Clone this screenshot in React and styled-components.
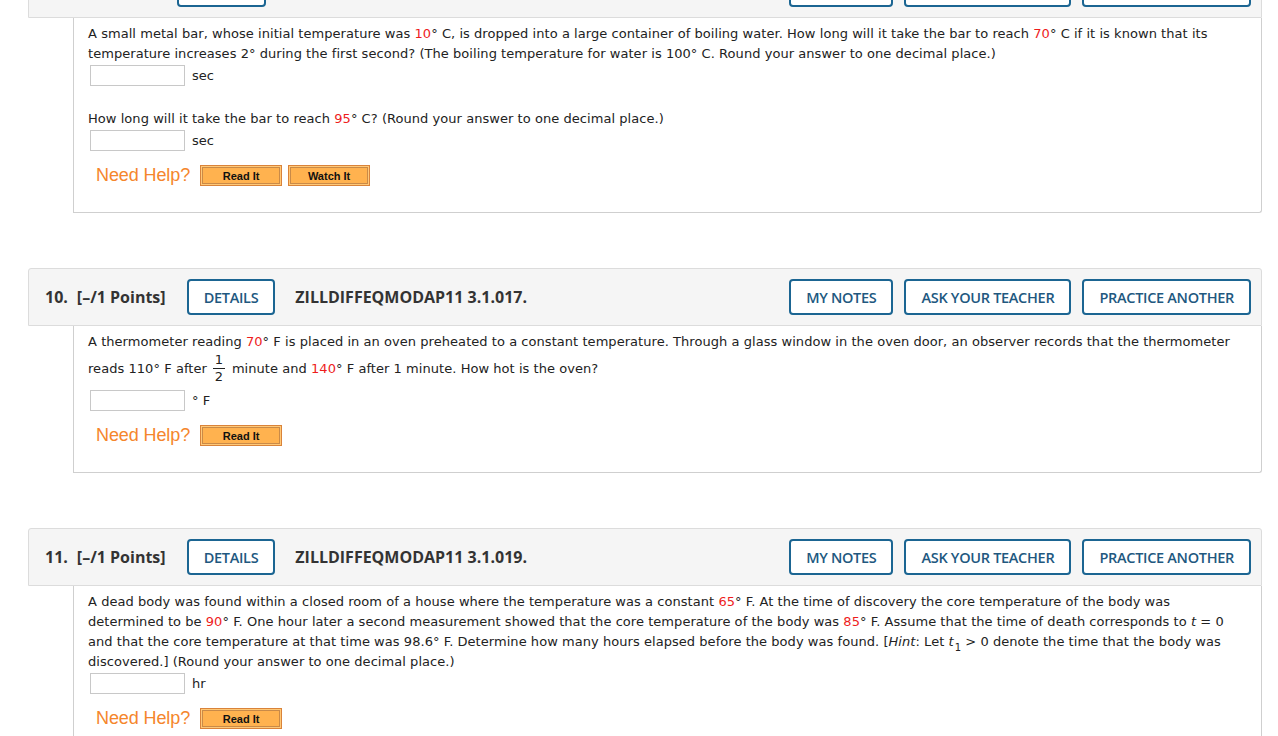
import React from 'react';
import styled, { createGlobalStyle } from 'styled-components';

const Global = createGlobalStyle`
  html, body { margin: 0; padding: 0; background: #fff; }
  body { font-family: "DejaVu Sans", Verdana, sans-serif; color: #222; }
`;

const Page = styled.div`
  margin-top: -40px;
  padding-left: 28px;
  width: 1234px;
  display: flex;
  flex-direction: column;
  gap: 55px;
`;

const Question = styled.section`
  display: flex;
  flex-direction: column;
`;

const Header = styled.div`
  box-sizing: border-box;
  height: 58px;
  display: flex;
  align-items: center;
  padding: 0 10px 0 16px;
  background: #f5f5f5;
  border: 1px solid #dcdcdc;
  border-radius: 3px 3px 0 0;
  font-family: "Open Sans", sans-serif;
  color: #333;
`;

const Num = styled.span`
  font-weight: 700;
  font-size: 16px;
  margin-right: 9px;
`;

const Points = styled.span`
  font-weight: 700;
  font-size: 16px;
`;

const Code = styled.span`
  font-weight: 700;
  font-size: 16px;
  margin-left: 20px;
`;

const Spacer = styled.div`
  flex: 1;
`;

const HeadButton = styled.button`
  box-sizing: border-box;
  height: 36px;
  padding: 0 15px;
  margin-left: ${p => p.$ml || 0}px;
  border: 2px solid #1b6592;
  border-radius: 4px;
  background: #fff;
  color: #21587f;
  font-family: "Open Sans", sans-serif;
  font-weight: 600;
  font-size: 14.5px;
  letter-spacing: -0.3px;
  cursor: pointer;
`;

const Panel = styled.div`
  margin-left: 45px;
  border: 1px solid #cfcfcf;
  border-top: none;
  border-radius: 0 0 3px 0;
  padding: 6px 14px 26px;
  font-size: 13px;
  letter-spacing: 0.05px;
`;

const Line = styled.div`
  line-height: 20px;
  white-space: nowrap;
  margin-top: ${p => p.$mt || 0}px;
`;

const FracLine = styled.div`
  height: 32px;
  margin-bottom: 6px;
  display: flex;
  align-items: center;
  white-space: pre;
`;

const Frac = styled.span`
  display: inline-flex;
  flex-direction: column;
  align-items: center;
  margin: 0 7px 0 6px;
  line-height: 16px;
  font-size: 13px;
`;

const FracBar = styled.span`
  display: block;
  width: 12px;
  border-top: 1px solid #222;
`;

const Red = styled.span`
  color: #ee1c1c;
`;

const Sub = styled.sub`
  font-size: 10px;
  line-height: 0;
  vertical-align: -5px;
  margin-left: 1px;
`;

const AnswerRow = styled.div`
  display: flex;
  align-items: center;
  margin-top: 1px;
`;

const Input = styled.input`
  box-sizing: border-box;
  width: 95px;
  height: 21px;
  margin: 0 0 0 2px;
  border: 1px solid #c8c8c8;
  background: #fff;
`;

const Unit = styled.span`
  margin-left: 7px;
  font-size: 13px;
`;

const HelpRow = styled.div`
  display: flex;
  align-items: center;
  gap: 6px;
  margin-top: 14px;
  padding-left: 8px;
`;

const NeedHelp = styled.span`
  font-family: "Liberation Sans", Arial, sans-serif;
  font-size: 18px;
  line-height: 21px;
  color: #f5862c;
  margin-right: 4px;
  letter-spacing: -0.1px;
`;

const HelpButton = styled.button`
  box-sizing: border-box;
  width: 82px;
  height: 21px;
  padding: 0;
  border: 1px solid #d9833a;
  background: #ffb24f;
  box-shadow: inset 0 0 0 1px #ffc877, inset 0 0 0 2px #c98a48;
  font-family: "Liberation Sans", Arial, sans-serif;
  font-weight: 700;
  font-size: 11px;
  color: #111;
  cursor: pointer;
`;

function QHeader({ num, code }) {
  return (
    <Header>
      <Num>{num}.</Num>
      <Points>[–/1 Points]</Points>
      <HeadButton $ml={21}>DETAILS</HeadButton>
      <Code>{code}</Code>
      <Spacer />
      <HeadButton>MY NOTES</HeadButton>
      <HeadButton $ml={11}>ASK YOUR TEACHER</HeadButton>
      <HeadButton $ml={11}>PRACTICE ANOTHER</HeadButton>
    </Header>
  );
}

function Answer({ unit }) {
  return (
    <AnswerRow>
      <Input type="text" />
      <Unit>{unit}</Unit>
    </AnswerRow>
  );
}

function Help({ watch }) {
  return (
    <HelpRow>
      <NeedHelp>Need Help?</NeedHelp>
      <HelpButton>Read It</HelpButton>
      {watch && <HelpButton>Watch It</HelpButton>}
    </HelpRow>
  );
}

export default function App() {
  return (
    <>
      <Global />
      <Page>
        <Question>
          <QHeader num={9} code="ZILLDIFFEQMODAP11 3.1.015." />
          <Panel>
            <Line>
              A small metal bar, whose initial temperature was <Red>10</Red>° C, is dropped into a large container of boiling water. How long will it take the bar to reach <Red>70</Red>° C if it is known that its
            </Line>
            <Line>
              temperature increases 2° during the first second? (The boiling temperature for water is 100° C. Round your answer to one decimal place.)
            </Line>
            <Answer unit="sec" />
            <Line $mt={23}>
              How long will it take the bar to reach <Red>95</Red>° C? (Round your answer to one decimal place.)
            </Line>
            <Answer unit="sec" />
            <Help watch />
          </Panel>
        </Question>

        <Question>
          <QHeader num={10} code="ZILLDIFFEQMODAP11 3.1.017." />
          <Panel>
            <Line>
              A thermometer reading <Red>70</Red>° F is placed in an oven preheated to a constant temperature. Through a glass window in the oven door, an observer records that the thermometer
            </Line>
            <FracLine>
              <span>reads 110° F after</span>
              <Frac>
                <span>1</span>
                <FracBar />
                <span>2</span>
              </Frac>
              <span>minute and <Red>140</Red>° F after 1 minute. How hot is the oven?</span>
            </FracLine>
            <Answer unit="° F" />
            <Help />
          </Panel>
        </Question>

        <Question>
          <QHeader num={11} code="ZILLDIFFEQMODAP11 3.1.019." />
          <Panel>
            <Line>
              A dead body was found within a closed room of a house where the temperature was a constant <Red>65</Red>° F. At the time of discovery the core temperature of the body was
            </Line>
            <Line>
              determined to be <Red>90</Red>° F. One hour later a second measurement showed that the core temperature of the body was <Red>85</Red>° F. Assume that the time of death corresponds to <i>t</i> = 0
            </Line>
            <Line>
              and that the core temperature at that time was 98.6° F. Determine how many hours elapsed before the body was found. [<i>Hint</i>: Let <i>t</i><Sub>1</Sub> &gt; 0 denote the time that the body was
            </Line>
            <Line>
              discovered.] (Round your answer to one decimal place.)
            </Line>
            <Answer unit="hr" />
            <Help />
          </Panel>
        </Question>
      </Page>
    </>
  );
}
